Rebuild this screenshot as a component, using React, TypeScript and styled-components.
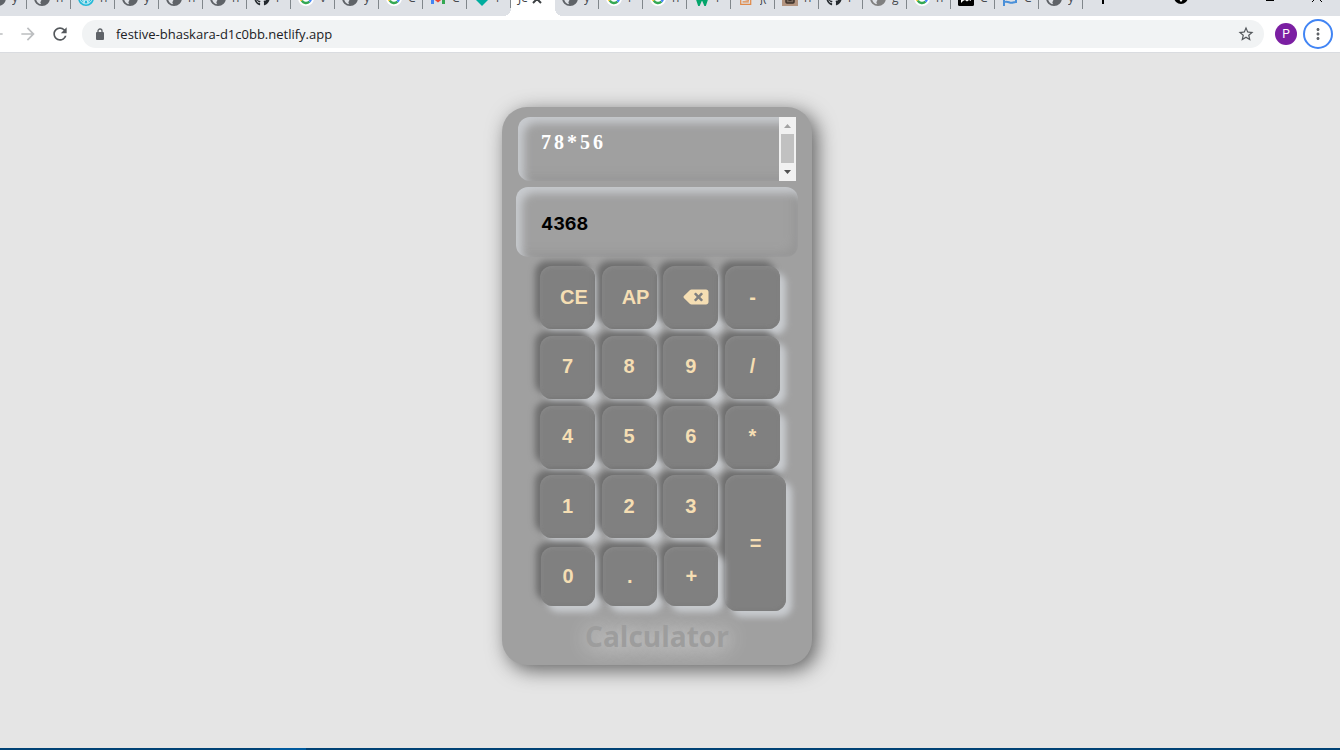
import React from "react";
import styled, { createGlobalStyle } from "styled-components";
import { FaBackspace, FaGithub, FaStackOverflow } from "react-icons/fa";
import { MdArrowForward, MdArrowBack, MdRefresh, MdStarBorder, MdMoreVert } from "react-icons/md";

const GlobalStyle = createGlobalStyle`
  *, *::before, *::after { box-sizing: border-box; }
  body { margin: 0; background: #e5e5e5; font-family: "Open Sans", "Noto Sans", sans-serif; }
  button { font: inherit; border: 0; padding: 0; background: none; cursor: pointer; }
`;

const Page = styled.div`
  min-height: 100vh;
  display: flex;
  flex-direction: column;
`;

const TabStrip = styled.div`
  height: 16px;
  overflow: hidden;
  display: flex;
  align-items: flex-end;
  background: #dee1e6;
`;

const Tabs = styled.div`
  display: flex;
  flex: none;
  margin-left: -17px;
`;

const Tab = styled.button<{ $active?: boolean }>`
  flex: none;
  width: 44px;
  height: 34px;
  display: flex;
  align-items: flex-start;
  gap: 6px;
  padding: 8px 0 0 7px;
  overflow: hidden;
  text-align: left;
  font-size: 12px;
  line-height: 16px;
  color: #45494d;
  background: ${(p) => (p.$active ? "#ffffff" : "linear-gradient(#80868b, #80868b) right 0 top 7px / 1px 20px no-repeat")};
`;

const ActiveTab = styled(Tab)`
  background: #ffffff;
  gap: 4px;
  position: relative;
  overflow: visible;
  color: #3c4043;
  &::before, &::after {
    content: "";
    position: absolute;
    bottom: 0;
    width: 8px;
    height: 8px;
  }
  &::before { left: -8px; background: radial-gradient(circle at 0 0, #dee1e6 8px, #ffffff 8px); }
  &::after { right: -8px; background: radial-gradient(circle at 100% 0, #dee1e6 8px, #ffffff 8px); }
`;

const TabIcon = styled.span`
  flex: none;
  width: 16px;
  height: 16px;
  svg { display: block; width: 16px; height: 16px; }
`;

const TabLabel = styled.span`
  flex: none;
  width: 9px;
  overflow: hidden;
  white-space: nowrap;
`;

const StripControls = styled.div`
  flex: 1;
  height: 34px;
  display: flex;
  align-items: flex-start;
  padding: 8px 16px 0 13px;
  color: #3c4043;
  svg { display: block; width: 14px; height: 14px; }
`;

const WindowButtons = styled.div`
  margin-left: auto;
  display: flex;
  gap: 33px;
`;

const SearchTabs = styled.button`
  margin-left: 64px;
`;

const Toolbar = styled.div`
  height: 37px;
  display: flex;
  align-items: center;
  background: #ffffff;
  border-bottom: 1px solid #dadce0;
  color: #5f6368;
`;

const NavButtons = styled.div`
  display: flex;
  align-items: center;
  gap: 12px;
  width: 82px;
  flex: none;
  margin-left: -14px;
  margin-right: 14px;
`;

const IconButton = styled.button<{ $muted?: boolean }>`
  display: flex;
  color: ${(p) => (p.$muted ? "#bcbec0" : "#54585c")};
  svg { width: 20px; height: 20px; }
`;

const AddressBar = styled.label`
  flex: 1;
  height: 28px;
  display: flex;
  align-items: center;
  gap: 11px;
  padding: 0 9px 0 13px;
  border-radius: 14px;
  background: #f1f3f4;
  > svg { flex: none; width: 10px; height: 12px; }
`;

const AddressInput = styled.input`
  flex: 1;
  min-width: 0;
  border: 0;
  padding: 0;
  outline: 0;
  background: none;
  color: #202124;
  font: 13px/20px "Open Sans", "Noto Sans", sans-serif;
`;

const StarButton = styled(IconButton)`
  svg { width: 18px; height: 18px; }
`;

const Avatar = styled.button`
  width: 22px;
  height: 22px;
  margin-left: 11px;
  border-radius: 50%;
  background: #7b1fa2;
  color: #ffffff;
  font: 12px/22px Roboto, sans-serif;
`;

const MenuButton = styled.button`
  width: 30px;
  height: 30px;
  margin: 0 7px 0 6px;
  display: flex;
  align-items: center;
  justify-content: center;
  border: 2px solid #4285f4;
  border-radius: 50%;
  color: #5f6368;
  svg { width: 18px; height: 18px; flex: none; }
`;

const Main = styled.main`
  flex: 1;
  display: flex;
  justify-content: center;
  align-items: flex-start;
  padding: 54px 26px 0 0;
`;

const Calculator = styled.section`
  width: 310px;
  display: flex;
  flex-direction: column;
  align-items: center;
  padding: 10px 14px 9px;
  border-radius: 25px;
  background: #a0a0a0;
  box-shadow: 5px 5px 20px #606060;
`;

const History = styled.div`
  width: 278px;
  height: 64px;
  display: flex;
  justify-content: space-between;
  border-radius: 12px 0 0 12px;
  box-shadow: inset 6px 6px 8px #c8cbcf, inset -5px -5px 8px #979797;
  padding-left: 23px;
  color: #ffffff;
  font: bold 20px/24px "Liberation Serif", serif;
  letter-spacing: 3px;
`;

const Expression = styled.span`
  padding-top: 13px;
`;

const ScrollTrack = styled.div`
  width: 17px;
  display: flex;
  flex-direction: column;
  align-items: center;
  background: #f1f1f1;
  svg { width: 17px; height: 17px; display: block; }
`;

const ScrollThumb = styled.div`
  width: 13px;
  height: 29px;
  background: #c1c1c1;
`;

const Result = styled.output`
  width: 282px;
  height: 70px;
  margin-top: 6px;
  padding: 4px 25px 0;
  display: flex;
  align-items: center;
  border-radius: 12px;
  box-shadow: inset 6px 6px 8px #c8cbcf, inset -5px -5px 8px #979797;
  color: #000000;
  font: bold 18px/24px Inter, sans-serif;
`;

const Keypad = styled.div`
  width: 240px;
  height: 345px;
  margin: 9px 0 0 6px;
  display: grid;
  grid-template-columns: repeat(4, 55px);
  grid-template-rows: repeat(4, 63px) 66px;
  place-content: space-between;
`;

const Key = styled.button<{ $kind?: "wide" | "base" | "equals" }>`
  width: 55px;
  height: 63px;
  padding-bottom: 2px;
  border-radius: 12px;
  background: #808080;
  color: #f5deb3;
  font: bold 20px/24px "Liberation Sans", sans-serif;
  box-shadow: 6px 6px 6px #c8cbcf, -5px -5px 6px #6e6e6e, inset 0 1px 4px #8c8c8c, inset -1px -1px 3px #757575;
  svg { display: block; width: 26px; height: 20px; }
  ${(p) => p.$kind === "wide" && "padding-left: 20px; text-align: left;"}
  ${(p) => p.$kind === "base" && "width: 54px; height: 59px; justify-self: end; margin-top: 2px;"}
  ${(p) => p.$kind === "equals" && "width: 61px; height: auto; padding-bottom: 0; grid-area: 4 / 4 / 6 / 5;"}
`;

const Title = styled.h1`
  margin: 5px 0 0;
  color: #9d9d9d;
  font: bold 28px/40px "Open Sans", "Noto Sans", sans-serif;
  text-shadow: 2px 2px 20px #e8e8e8;
`;

const Taskbar = styled.div`
  height: 2px;
  background: #004275;
`;

const TaskbarItem = styled.div`
  width: 36px;
  height: 2px;
  margin-left: 270px;
  background: #005a9e;
`;

const Lock = () => (
  <svg viewBox="0 0 10 12">
    <rect x="1" y="4" width="8" height="8" rx="1" fill="#5f6368" />
    <path d="M3 5V3a2 2 0 0 1 4 0v2" fill="none" stroke="#5f6368" strokeWidth="1.300" />
  </svg>
);

const Google = () => (
  <svg viewBox="0 0 16 16">
    <circle cx="8" cy="8" r="8" fill="#fff" />
    <g fill="none" strokeWidth="2.4">
      <path d="M3.6 5.6A5 5 0 0 1 11.5 4.4" stroke="#ea4335" />
      <path d="M3.6 5.6A5 5 0 0 0 3.8 10.7" stroke="#fbbc05" />
      <path d="M3.8 10.7A5 5 0 0 0 11.4 11.7" stroke="#34a853" />
      <path d="M8 8H13A5 5 0 0 1 11.4 11.7" stroke="#4285f4" />
    </g>
  </svg>
);

const Globe = ({ color = "#5f6368" }: { color?: string }) => (
  <svg viewBox="0 0 16 16">
    <circle cx="8" cy="8" r="8" fill={color} />
    <path d="M2 8c2 0 4 .3 5 1.500s-1 2-.5 3.500c.2.600.7.900.7 1.300A6.200 6.200 0 0 1 2 8zM8.500 2c1 2 .5 3-1 3.500 1 1.500 2 2 3.500 2 .8 1 .6 2 2.700 2.200A6.200 6.200 0 0 0 8.500 2z" fill="#dee1e6" />
  </svg>
);

const Cyan = () => (
  <svg viewBox="0 0 16 16">
    <circle cx="8" cy="8" r="8" fill="#22b8d8" />
    <g fill="none" stroke="#c9eef6" strokeWidth="1">
      <circle cx="8" cy="8" r="6" />
      <path d="M3 7l3 6 2-6 2 6 3-6M5 10h6" />
    </g>
  </svg>
);

const Gmail = () => (
  <svg viewBox="0 0 16 16">
    <path d="M1 3v11h3V7z" fill="#4285f4" />
    <path d="M15 3v11h-3V7z" fill="#34a853" />
    <path d="M1 3l7 5.500L15 3v4l-7 5.500L1 7z" fill="#ea4335" />
  </svg>
);

const Diamond = () => (
  <svg viewBox="0 0 16 16"><path d="M8 0l8 8-8 8-8-8z" fill="#00ad9f" /></svg>
);

const GreenMark = () => (
  <svg viewBox="0 0 16 16"><path d="M2 4l3 9 3-7 3 7 3-9" fill="none" stroke="#04a56b" strokeWidth="3.500" /></svg>
);

const Brown = () => (
  <svg viewBox="0 0 16 16">
    <path d="M0 0h16v16H0z" fill="#b3947f" />
    <rect x="4" y="4" width="8" height="9" rx="1" fill="#77665a" stroke="#3d3029" strokeWidth="1.500" />
    <path d="M6.500 10h3" stroke="#2a211c" strokeWidth="1.500" />
  </svg>
);

const BlackBadge = () => (
  <svg viewBox="0 0 16 16">
    <rect width="16" height="16" rx="1.500" fill="#000" />
    <path d="M3 13V6h10v5l-2-1-2 1.500L7 10l-2 1z" fill="#fff" />
  </svg>
);

const Flag = () => (
  <svg viewBox="0 0 16 16" fill="none" stroke="#4a90d9" strokeWidth="2">
    <path d="M2 2v14M3 12c3-1.500 5 2 8 .5 1-.5 2-.5 3-.5V4H3" />
  </svg>
);

const tabsBefore: [React.ReactNode, string][] = [
  [<Globe />, "y"], [<Globe />, "n"], [<Cyan />, "n"], [<Globe />, "y"], [<Globe />, "n"], [<Globe />, "n"],
  [<FaGithub color="#24292e" />, "r"], [<Google />, "v"], [<Globe />, "y"], [<Google />, "C"], [<Gmail />, "C"], [<Diamond />, "r"],
];

const tabsAfter: [React.ReactNode, string][] = [
  [<Globe />, "y"], [<Google />, "r"], [<Google />, "n"], [<GreenMark />, "r"], [<FaStackOverflow color="#e08a4a" />, "j("],
  [<Brown />, "n"], [<FaGithub color="#24292e" />, "r"], [<Globe color="#808080" />, "g"], [<Google />, "n"],
  [<BlackBadge />, "C"], [<Flag />, "C"], [<Globe />, "y"],
];

const renderTab = ([icon, label]: [React.ReactNode, string], i: number) => (
  <Tab key={i}>
    <TabIcon>{icon}</TabIcon>
    <TabLabel>{label}</TabLabel>
  </Tab>
);

const keys = ["7", "8", "9", "/", "4", "5", "6", "*", "1", "2", "3"];

export default function App() {
  return (
    <Page>
      <GlobalStyle />
      <TabStrip>
        <Tabs>
          {tabsBefore.map(renderTab)}
          <ActiveTab $active>
            <span>Je</span>
            <svg width="10" height="14" viewBox="0 0 10 14" stroke="#3c4043" strokeWidth="2">
              <path d="M1 5l8 8M9 5l-8 8" />
            </svg>
          </ActiveTab>
          {tabsAfter.map(renderTab)}
        </Tabs>
        <StripControls>
          <button aria-label="New tab">
            <svg viewBox="0 0 14 14" stroke="currentColor" strokeWidth="2"><path d="M7 0v14M0 7h14" /></svg>
          </button>
          <SearchTabs aria-label="Search tabs">
            <svg viewBox="0 0 14 14"><circle cx="7" cy="7" r="7" fill="currentColor" /><path d="M4 8l3 4 3-4z" fill="#fff" /></svg>
          </SearchTabs>
          <WindowButtons>
            <button aria-label="Minimize">
              <svg viewBox="0 0 14 14"><path d="M3 10h8v1H3z" fill="#000" /></svg>
            </button>
            <button aria-label="Close">
              <svg viewBox="0 0 14 14" stroke="#000"><path d="M2 2l10 10M12 2L2 12" /></svg>
            </button>
          </WindowButtons>
        </StripControls>
      </TabStrip>
      <Toolbar>
        <NavButtons>
          <IconButton $muted aria-label="Back"><MdArrowBack /></IconButton>
          <IconButton $muted aria-label="Forward"><MdArrowForward /></IconButton>
          <IconButton aria-label="Reload"><MdRefresh /></IconButton>
        </NavButtons>
        <AddressBar>
          <Lock />
          <AddressInput aria-label="Address" defaultValue="festive-bhaskara-d1c0bb.netlify.app" />
          <StarButton aria-label="Bookmark"><MdStarBorder /></StarButton>
        </AddressBar>
        <Avatar aria-label="Profile">P</Avatar>
        <MenuButton aria-label="Menu"><MdMoreVert /></MenuButton>
      </Toolbar>
      <Main>
        <Calculator>
          <History>
            <Expression>78*56</Expression>
            <ScrollTrack>
              <svg viewBox="0 0 17 17"><path d="M5 11l3.500-4 3.500 4z" fill="#a3a3a3" /></svg>
              <ScrollThumb />
              <svg viewBox="0 0 17 17"><path d="M5 7h7l-3.500 4z" fill="#505050" /></svg>
            </ScrollTrack>
          </History>
          <Result>4368</Result>
          <Keypad>
            <Key $kind="wide">CE</Key>
            <Key $kind="wide">AP</Key>
            <Key $kind="wide" aria-label="Backspace"><FaBackspace /></Key>
            <Key>-</Key>
            {keys.map((k) => <Key key={k}>{k}</Key>)}
            <Key $kind="equals">=</Key>
            <Key $kind="base">0</Key>
            <Key $kind="base">.</Key>
            <Key $kind="base">+</Key>
          </Keypad>
          <Title>Calculator</Title>
        </Calculator>
      </Main>
      <Taskbar><TaskbarItem /></Taskbar>
    </Page>
  );
}
